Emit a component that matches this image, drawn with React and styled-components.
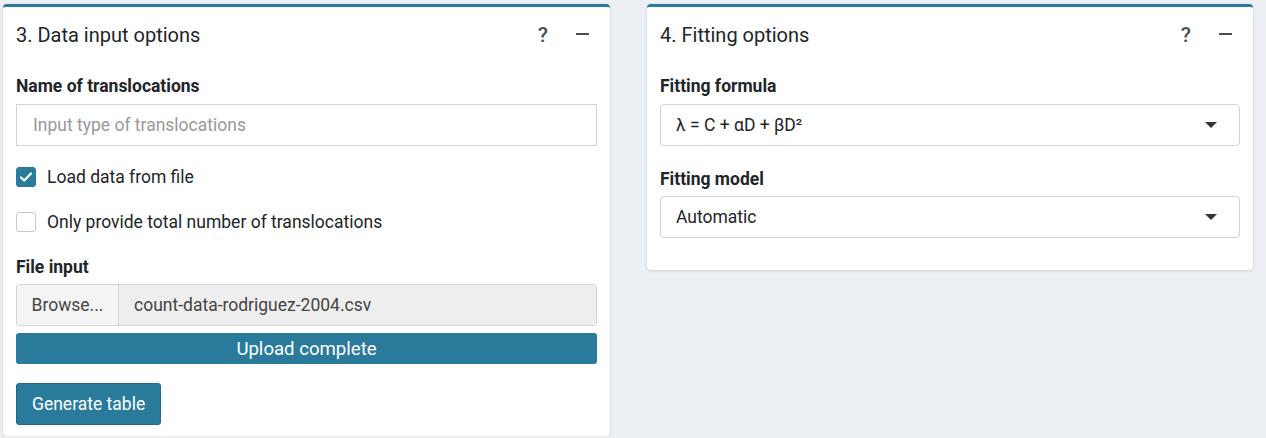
import React from 'react'
import styled, { createGlobalStyle } from 'styled-components'

const teal = '#2a7b9b'

const GlobalStyle = createGlobalStyle`
  body {
    margin: 0;
    background: #ecf0f5;
    font-family: Roboto, "Liberation Sans", sans-serif;
    color: #212529;
  }
`

const Page = styled.div`
  display: grid;
  grid-template-columns: 607px 606px;
  column-gap: 37px;
  align-items: start;
  padding: 4px 13px 0 3px;
`

const Card = styled.div`
  background: #fff;
  border-top: 3px solid ${teal};
  border-radius: 4px;
  box-shadow: 0 0 1px rgba(0, 0, 0, 0.13), 0 1px 3px rgba(0, 0, 0, 0.12);
  height: ${p => p.$height}px;
  box-sizing: border-box;
`

const Header = styled.div`
  display: flex;
  align-items: center;
  height: 56px;
  padding: 0 21px 0 13px;
`

const Title = styled.h3`
  flex: 1;
  margin: 0;
  font-size: 20px;
  font-weight: 400;
  line-height: 24px;
`

const Tools = styled.div`
  display: flex;
  align-items: center;
  gap: 28px;
  color: #495057;
`

const Help = styled.span`
  font-size: 21px;
  font-weight: 500;
  line-height: 24px;
`

const Minus = styled.span`
  display: block;
  width: 13px;
  height: 2px;
  background: #495057;
  margin-top: -2px;
`

const Body = styled.div`
  padding: 11px 13px 0 13px;
  font-size: 17.5px;
`

const Label = styled.div`
  font-weight: 700;
  line-height: 22px;
  padding-top: 1px;
  margin-bottom: ${p => p.$mb ?? 7}px;
`

const TextInput = styled.input`
  display: block;
  width: 100%;
  box-sizing: border-box;
  height: 42px;
  border: 1px solid #ced4da;
  border-radius: 0;
  padding: 0 16px;
  font: 17.5px Roboto, "Liberation Sans", sans-serif;
  color: #212529;
  &::placeholder {
    color: #999;
  }
`

const CheckRow = styled.label`
  display: flex;
  align-items: center;
  gap: 11px;
  line-height: 22px;
  margin-top: ${p => p.$mt}px;
`

const Box = styled.span`
  width: 20px;
  height: 20px;
  box-sizing: border-box;
  border-radius: 3px;
  display: flex;
  align-items: center;
  justify-content: center;
  background: ${p => (p.$checked ? teal : '#fff')};
  border: 1px solid ${p => (p.$checked ? teal : '#c4c9cf')};
`

const FileGroup = styled.div`
  display: flex;
  height: 42px;
  box-sizing: border-box;
  border: 1px solid #d2d6de;
  border-radius: 3px;
  overflow: hidden;
  color: #444;
`

const Browse = styled.div`
  width: 101px;
  display: flex;
  align-items: center;
  justify-content: center;
  background: #f4f4f4;
  border-right: 1px solid #d2d6de;
`

const FileName = styled.div`
  flex: 1;
  display: flex;
  align-items: center;
  padding-left: 15px;
  background: #eeeeee;
`

const Progress = styled.div`
  margin-top: 7px;
  height: 31px;
  border-radius: 3px;
  background: ${teal};
  color: #fff;
  font-size: 18.6px;
  display: flex;
  align-items: center;
  justify-content: center;
`

const Button = styled.button`
  margin-top: 19px;
  height: 42px;
  padding: 0 15px;
  background: ${teal};
  border: 1px solid #23677f;
  border-radius: 3px;
  color: #fff;
  font: 17.5px Roboto, "Liberation Sans", sans-serif;
`

const Select = styled.div`
  display: flex;
  align-items: center;
  justify-content: space-between;
  height: 42px;
  box-sizing: border-box;
  border: 1px solid #ced4da;
  border-radius: 4px;
  padding: 0 22px 0 15px;
  color: #212529;
`

const Caret = styled.span`
  width: 0;
  height: 0;
  border-left: 6px solid transparent;
  border-right: 6px solid transparent;
  border-top: 6px solid #333;
`

const Check = () => (
  <svg width="14" height="12" viewBox="0 0 14 12">
    <path d="M2 6.5l3.2 3L12 2.5" fill="none" stroke="#fff" strokeWidth="2.2" strokeLinecap="round" strokeLinejoin="round" />
  </svg>
)

const CardHeader = ({ title }) => (
  <Header>
    <Title>{title}</Title>
    <Tools>
      <Help>?</Help>
      <Minus />
    </Tools>
  </Header>
)

export default function App() {
  return (
    <>
      <GlobalStyle />
      <Page>
        <Card $height={432}>
          <CardHeader title="3. Data input options" />
          <Body>
            <Label>Name of translocations</Label>
            <TextInput placeholder="Input type of translocations" />
            <CheckRow $mt={20}>
              <Box $checked><Check /></Box>
              Load data from file
            </CheckRow>
            <CheckRow $mt={23}>
              <Box />
              Only provide total number of translocations
            </CheckRow>
            <div style={{ marginTop: 22 }}>
              <Label $mb={6}>File input</Label>
            </div>
            <FileGroup>
              <Browse>Browse...</Browse>
              <FileName>count-data-rodriguez-2004.csv</FileName>
            </FileGroup>
            <Progress>Upload complete</Progress>
            <Button>Generate table</Button>
          </Body>
        </Card>
        <Card $height={266}>
          <CardHeader title="4. Fitting options" />
          <Body>
            <Label>Fitting formula</Label>
            <Select>
              λ = C + αD + βD²
              <Caret />
            </Select>
            <div style={{ marginTop: 21 }}>
              <Label $mb={6}>Fitting model</Label>
            </div>
            <Select>
              Automatic
              <Caret />
            </Select>
          </Body>
        </Card>
      </Page>
    </>
  )
}
